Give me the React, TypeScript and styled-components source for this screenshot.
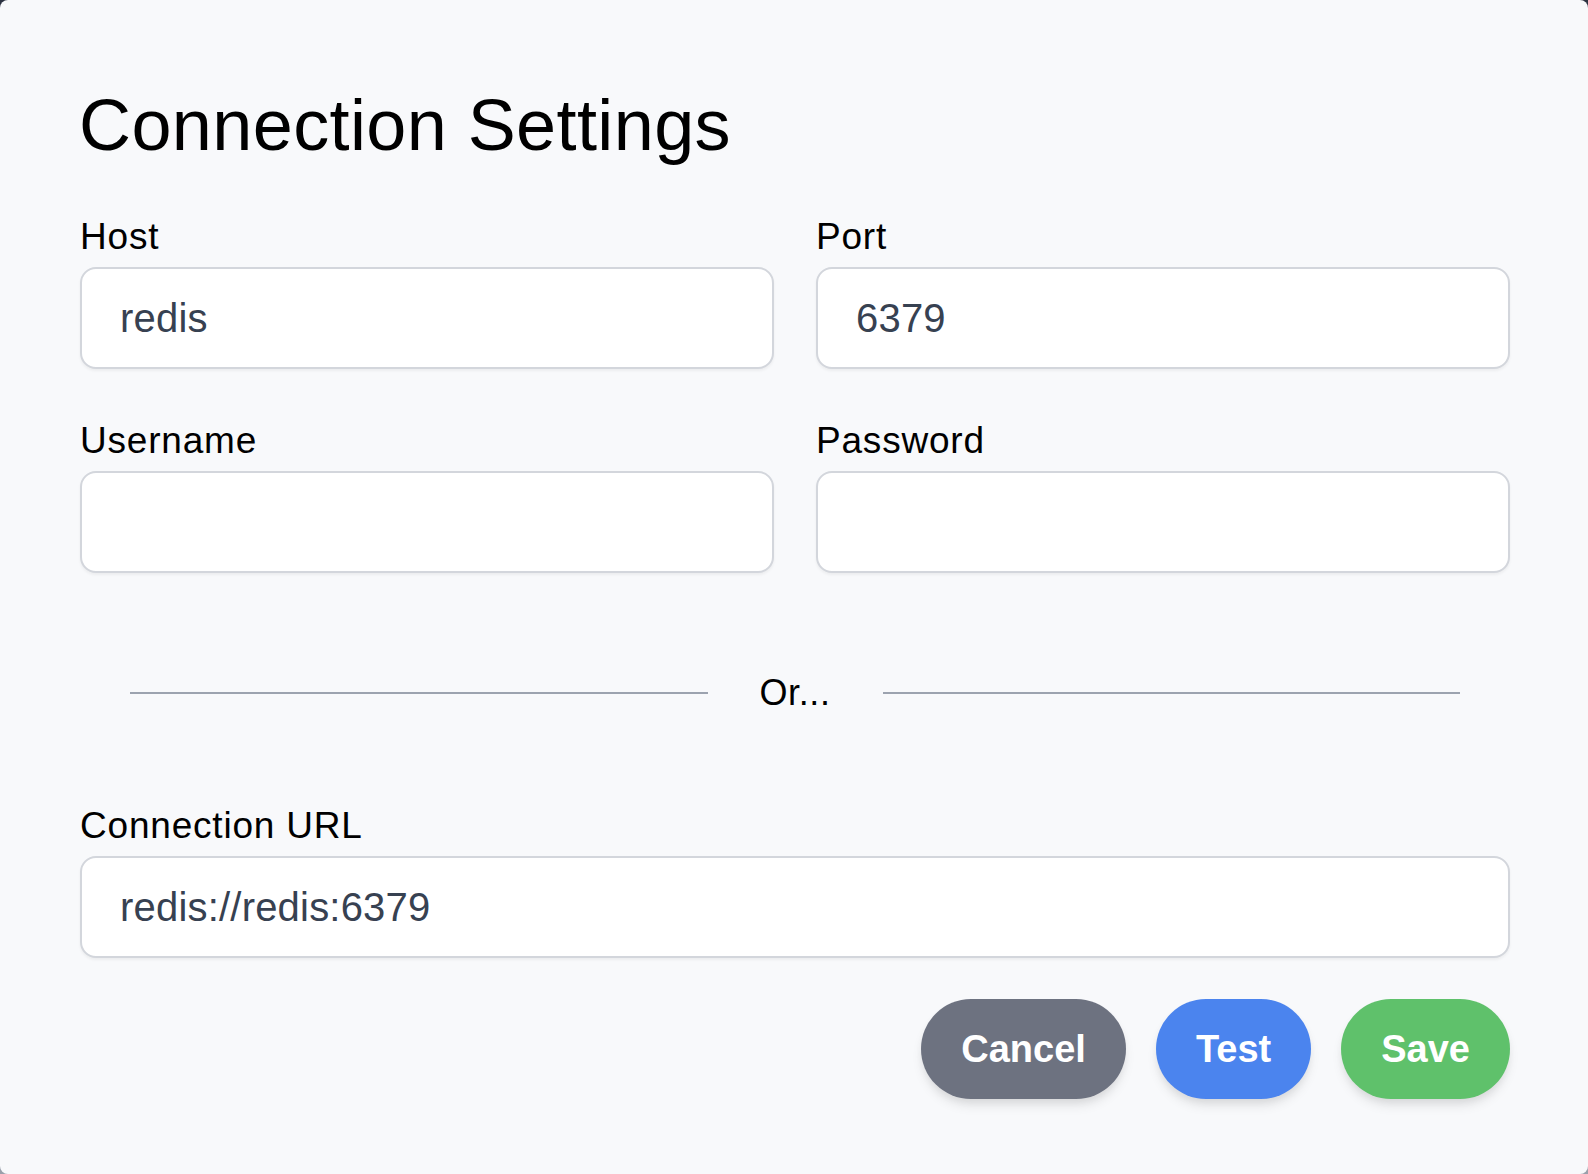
import React, { FunctionComponent } from 'react';
import styled, { createGlobalStyle } from 'styled-components';

const fontStack = '"Liberation Sans", Arial, Helvetica, sans-serif';
const textColor = '#000000';
const inputTextColor = '#374151';
const borderColor = '#d3d6dc';
const panelBg = '#f8f9fb';

const GlobalStyle = createGlobalStyle`
  html, body {
    margin: 0;
    padding: 0;
  }
  body {
    font-family: ${fontStack};
    background: linear-gradient(180deg, #2c3241 0%, #9aa0ab 100%);
  }
  * {
    box-sizing: border-box;
  }
`;

type ButtonProps = {
  $tone: 'cancel' | 'test' | 'save';
};

const toneColors = {
  cancel: '#6d7280',
  test: '#4b84ee',
  save: '#5fc16b',
};

const Dialog = styled.div`
  width: 1588px;
  height: 1174px;
  padding: 85px 78px 0 80px;
  background-color: ${panelBg};
  border-radius: 8px;
  color: ${textColor};
`;

const Title = styled.h1`
  margin: 0;
  margin-left: -1px;
  font-size: 72px;
  line-height: 80px;
  font-weight: 400;
  letter-spacing: 0.4px;
`;

const FieldGrid = styled.div`
  display: grid;
  grid-template-columns: 1fr 1fr;
  column-gap: 42px;
  row-gap: 44px;
  margin-top: 44px;
`;

const Field = styled.div`
  display: flex;
  flex-direction: column;
`;

const Label = styled.label`
  font-size: 37px;
  line-height: 56px;
  letter-spacing: 0.8px;
  margin-bottom: 2px;
`;

const TextInput = styled.input`
  display: block;
  width: 100%;
  height: 102px;
  padding: 0 38px;
  font-family: ${fontStack};
  font-size: 40px;
  letter-spacing: 0.2px;
  color: ${inputTextColor};
  background-color: #ffffff;
  border: 2px solid ${borderColor};
  border-radius: 16px;
  box-shadow: 0 2px 3px rgba(0, 0, 0, 0.05);
  outline: none;
`;

const Divider = styled.div`
  display: flex;
  align-items: center;
  margin-top: 92px;
  padding: 0 50px;
`;

const DividerLine = styled.div`
  flex: 1;
  height: 2px;
  background-color: #9ca3af;
`;

const DividerText = styled.span`
  margin: 0 52px;
  font-size: 36px;
  line-height: 56px;
  letter-spacing: 0.6px;
`;

const UrlField = styled(Field)`
  margin-top: 77px;
`;

const ButtonRow = styled.div`
  display: flex;
  justify-content: flex-end;
  gap: 30px;
  margin-top: 41px;
`;

const Button = styled.button<ButtonProps>`
  height: 100px;
  padding: 0 40px;
  font-family: ${fontStack};
  font-size: 38px;
  font-weight: 700;
  color: #ffffff;
  background-color: ${(props) => toneColors[props.$tone]};
  border: none;
  border-radius: 9999px;
  box-shadow: 0 8px 12px -2px rgba(0, 0, 0, 0.1), 0 4px 8px -2px rgba(0, 0, 0, 0.06);
  cursor: pointer;
`;

const App: FunctionComponent = () => (
  <>
    <GlobalStyle />
    <Dialog>
      <Title>Connection Settings</Title>
      <FieldGrid>
        <Field>
          <Label htmlFor="host">Host</Label>
          <TextInput id="host" type="text" defaultValue="redis" />
        </Field>
        <Field>
          <Label htmlFor="port">Port</Label>
          <TextInput id="port" type="text" defaultValue="6379" />
        </Field>
        <Field>
          <Label htmlFor="username">Username</Label>
          <TextInput id="username" type="text" />
        </Field>
        <Field>
          <Label htmlFor="password">Password</Label>
          <TextInput id="password" type="password" />
        </Field>
      </FieldGrid>
      <Divider>
        <DividerLine />
        <DividerText>Or...</DividerText>
        <DividerLine />
      </Divider>
      <UrlField>
        <Label htmlFor="url">Connection URL</Label>
        <TextInput id="url" type="text" defaultValue="redis://redis:6379" />
      </UrlField>
      <ButtonRow>
        <Button $tone="cancel">Cancel</Button>
        <Button $tone="test">Test</Button>
        <Button $tone="save">Save</Button>
      </ButtonRow>
    </Dialog>
  </>
);

export default App;
